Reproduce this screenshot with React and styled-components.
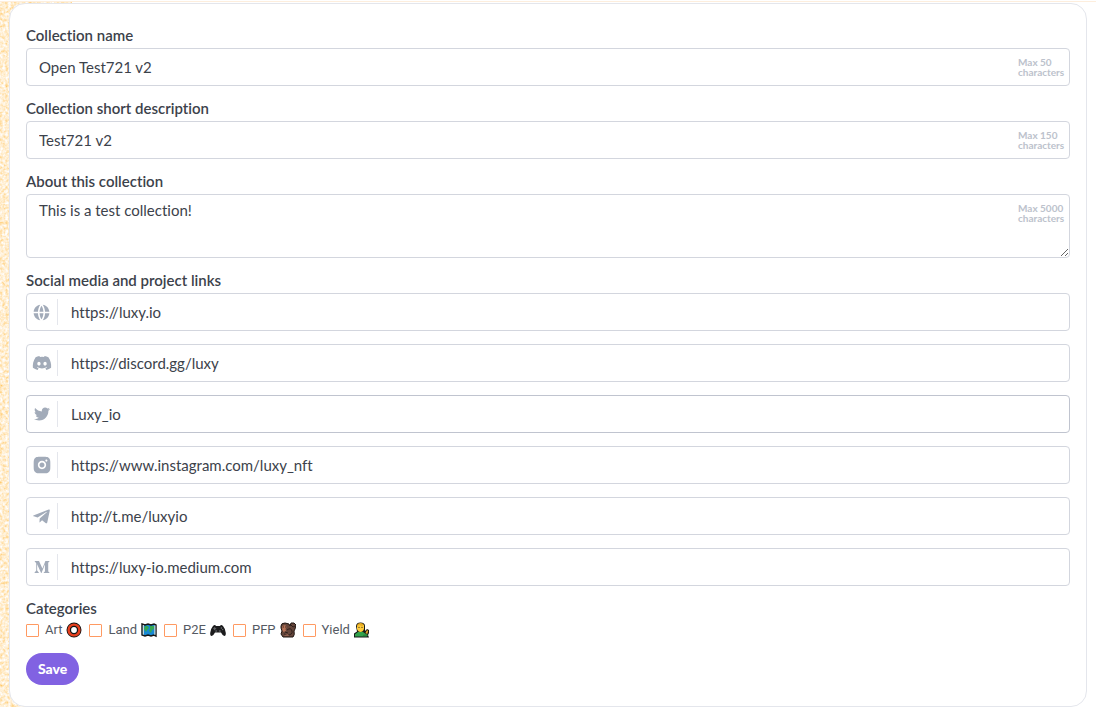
import React, { useState } from 'react';
import styled, { createGlobalStyle } from 'styled-components';
import { FaDiscord, FaTwitter, FaTelegramPlane, FaMediumM } from 'react-icons/fa';
import { RiGlobalFill, RiInstagramFill } from 'react-icons/ri';

const GlobalStyle = createGlobalStyle`
  * {
    box-sizing: border-box;
  }

  body {
    margin: 0;
    background: #fff;
    color: #3c424b;
    font-family: Lato, "Open Sans", sans-serif;
    font-size: 15px;
    font-variant-ligatures: none;
  }
`;

const Page = styled.main`
  position: relative;
  padding: 0 9px;
`;

const TopLine = styled.div`
  height: 2px;
  margin: 0 -9px 1px;
  border-bottom: 1px solid #fdeedd;
`;

const Texture = styled.svg`
  position: absolute;
  top: 2px;
  left: 0;
  z-index: -1;
  width: 72px;
  height: calc(100% - 2px);
`;

const Card = styled.form`
  display: flex;
  flex-direction: column;
  gap: 12px;
  padding: 21px 16px;
  background: #fff;
  border: 1px solid #e4e6ec;
  border-radius: 16px;
`;

const Field = styled.div`
  display: flex;
  flex-direction: column;
  gap: 3px;
`;

const labelText = `
  font-size: 15px;
  font-weight: 600;
  line-height: 20px;
`;

const Label = styled.label`
  ${labelText}
`;

const Group = styled.fieldset`
  min-width: 0;
  margin: 0;
  padding: 0;
  border: 0;
`;

const Legend = styled.legend`
  padding: 0;
  margin-bottom: 3px;
  ${labelText}
`;

const Control = styled.div`
  position: relative;
  display: flex;
`;

const Input = styled.input`
  flex: 1;
  min-width: 0;
  height: 38px;
  padding: 0 72px 0 12px;
  border: 1px solid #d3d6de;
  border-radius: 4px;
  background: #fff;
  color: inherit;
  font: inherit;
`;

const TextArea = styled.textarea`
  flex: 1;
  min-width: 0;
  height: 64px;
  padding: 5px 72px 5px 12px;
  border: 1px solid #d3d6de;
  border-radius: 4px;
  background: #fff;
  color: inherit;
  font: inherit;
  line-height: 20px;
  resize: vertical;
`;

const Hint = styled.span`
  position: absolute;
  top: 9px;
  right: 4px;
  width: 48px;
  color: #bcc2cc;
  font-size: 10px;
  font-weight: 700;
  line-height: 10px;
  pointer-events: none;
`;

const Links = styled.div`
  display: flex;
  flex-direction: column;
  gap: 13px;
`;

const LinkBox = styled.label`
  display: flex;
  align-items: center;
  height: 38px;
  border: 1px solid ${({ $strong }) => ($strong ? '#c0c4cf' : '#d3d6de')};
  border-radius: 4px;
`;

const IconCell = styled.span`
  display: flex;
  flex: none;
  align-items: center;
  justify-content: center;
  width: 31px;
  height: 26px;
  padding-right: 1px;
  border-right: 1px solid #e4e6ec;
  color: #a2abb9;
`;

const LinkInput = styled.input`
  flex: 1;
  min-width: 0;
  padding: 0 13px;
  border: 0;
  outline: 0;
  background: transparent;
  color: inherit;
  font: inherit;
`;

const Categories = styled.div`
  display: flex;
  flex-wrap: wrap;
  align-content: flex-start;
  gap: 7px;
  min-height: 20px;
`;

const Category = styled.label`
  display: flex;
  align-items: center;
  gap: 4px;
  color: #555a63;
  font-family: Roboto, sans-serif;
  font-size: 13px;
  line-height: 18px;

  svg {
    flex: none;
  }
`;

const Checkbox = styled.input`
  appearance: none;
  width: 13px;
  height: 13px;
  margin: 0 2px 0 0;
  border: 1px solid #ff9a62;
  border-radius: 1px;

  &:checked {
    background: #ff9a62;
  }
`;

const SaveButton = styled.button`
  align-self: flex-start;
  height: 32px;
  padding: 0 12px;
  border: 0;
  border-radius: 16px;
  background: #8162e2;
  color: #fff;
  font: inherit;
  font-size: 14px;
  font-weight: 900;
  line-height: 20px;
  cursor: pointer;
`;

const ArtIcon = () => (
  <svg width="16" height="16" viewBox="0 0 16 16" aria-hidden="true">
    <circle cx="8" cy="8" r="5.2" fill="none" stroke="#151515" strokeWidth="4.6" />
    <circle cx="8" cy="8" r="5.4" fill="none" stroke="#e8401f" strokeWidth="2.4" />
  </svg>
);

const LandIcon = () => (
  <svg width="16" height="16" viewBox="0 0 16 16" aria-hidden="true">
    <path d="M1 2l3 1 3-1 3 1 3-1 2 1v11l-2-1-3 1-3-1-3 1-3-1z" fill="#1689d4" stroke="#151515" strokeWidth="1.4" />
    <path d="M2.3 3v9.6M13.9 3.4v9.4" stroke="#f1e9d5" strokeWidth="1" />
    <path d="M4 4l3 0 1 2-2 2-1 2-2-3zM9 4l4 0v3l-2 1-1 3-2-2 1-2z" fill="#35a853" />
  </svg>
);

const GameIcon = () => (
  <svg width="16" height="16" viewBox="0 0 16 16" aria-hidden="true">
    <path d="M3 4q2-2 3 0h4q1-2 3 0 2 2 2.8 7 .2 3-1.5 3-1.5 0-3.3-3.5H5Q3.2 14 1.7 14 0 14 .2 11 1 6 3 4z" fill="#1c1c1d" />
    <path d="M3.2 6.7h3M4.7 5.2v3" stroke="#6b6d70" />
    <circle cx="11.4" cy="6" r=".8" fill="#77797c" />
    <circle cx="12.7" cy="7.6" r=".7" fill="#77797c" />
    <circle cx="6.2" cy="9" r="1" fill="#505257" />
    <circle cx="9.8" cy="9" r="1" fill="#505257" />
  </svg>
);

const ApeIcon = () => (
  <svg width="16" height="16" viewBox="0 0 16 16" aria-hidden="true">
    <path d="M1 4q0-3 4-3l4 1 1 2 1-3h3l2 2-1 4-1 2q1 4-1 6H3l-2-3 1-3-1-3z" fill="#64453a" stroke="#201612" strokeWidth="1" />
    <path d="M2.2 4l3-1 1.3 2-1 2 .5 2-2.4 1-1.4-2z" fill="#b67358" />
    <path d="M2.8 5h1M5.2 5H6" stroke="#241611" />
    <path d="M7 8q4-3 5 1t-5 4l-3-1M11 3l2 2 2-1M5 10l3 1" fill="none" stroke="#291b17" strokeWidth=".9" />
    <path d="M4 13l4-1 1 2H5z" fill="#906050" />
  </svg>
);

const YieldIcon = () => (
  <svg width="16" height="16" viewBox="0 0 16 16" aria-hidden="true">
    <path d="M0 15.5v-4l3-2-1-5Q2 .5 6.5.5T11 4v5l2-2 2 1v3l-1 2 1 2.5z" fill="#171a16" />
    <path d="M1 14.5v-2.3L4 10h5l3 2 1 2.5z" fill="#31a24c" />
    <path d="M3 3h7v4q-1 3-3.5 3T3 7z" fill="#ffcb3d" />
    <path d="M3 5V3q1-2 3.5-2T10 3L8 4 5 3z" fill="#e8ac21" />
    <path d="M4.5 5.4h1M7.5 5.4h1" stroke="#352b18" />
    <path d="M11.5 11l1.5-3 1.2 1-1 3z" fill="#e8a72a" />
    <path d="M9 13l4-1 1 2H9z" fill="#28863c" />
  </svg>
);

const links = [
  { name: 'Website', value: 'https://luxy.io', icon: <RiGlobalFill size={19} /> },
  { name: 'Discord', value: 'https://discord.gg/luxy', icon: <FaDiscord size={20} /> },
  { name: 'Twitter', value: 'Luxy_io', icon: <FaTwitter size={16} />, strong: true },
  { name: 'Instagram', value: 'https://www.instagram.com/luxy_nft', icon: <RiInstagramFill size={20} /> },
  { name: 'Telegram', value: 'http://t.me/luxyio', icon: <FaTelegramPlane size={19} /> },
  { name: 'Medium', value: 'https://luxy-io.medium.com', icon: <FaMediumM size={16} /> },
];

const categories = [
  { name: 'Art', icon: <ArtIcon /> },
  { name: 'Land', icon: <LandIcon /> },
  { name: 'P2E', icon: <GameIcon /> },
  { name: 'PFP', icon: <ApeIcon /> },
  { name: 'Yield', icon: <YieldIcon /> },
];

const App = () => {
  const [name, setName] = useState('Open Test721 v2');
  const [short, setShort] = useState('Test721 v2');
  const [about, setAbout] = useState('This is a test collection!');

  return (
    <>
      <GlobalStyle />
      <Page>
        <TopLine />
        <Texture aria-hidden="true">
          <filter id="grain" x="0" y="0" width="100%" height="100%">
            <feTurbulence type="fractalNoise" baseFrequency="0.35" numOctaves="2" seed="4" />
            <feColorMatrix values="0 0 0 0 1  0.4 0 0 0 0.64  1.1 0 0 0 0.01  0 0 0 0 1" colorInterpolationFilters="sRGB" />
          </filter>
          <rect width="100%" height="100%" filter="url(#grain)" />
        </Texture>
        <Card onSubmit={(e) => e.preventDefault()}>
          <Field>
            <Label htmlFor="name">Collection name</Label>
            <Control>
              <Input id="name" maxLength={50} value={name} onChange={(e) => setName(e.target.value)} />
              <Hint>Max 50 characters</Hint>
            </Control>
          </Field>
          <Field>
            <Label htmlFor="short">Collection short description</Label>
            <Control>
              <Input id="short" maxLength={150} value={short} onChange={(e) => setShort(e.target.value)} />
              <Hint>Max 150 characters</Hint>
            </Control>
          </Field>
          <Field>
            <Label htmlFor="about">About this collection</Label>
            <Control>
              <TextArea id="about" maxLength={5000} value={about} onChange={(e) => setAbout(e.target.value)} />
              <Hint>Max 5000 characters</Hint>
            </Control>
          </Field>
          <Group>
            <Legend>Social media and project links</Legend>
            <Links>
              {links.map((link) => (
                <LinkBox key={link.name} $strong={link.strong}>
                  <IconCell>{link.icon}</IconCell>
                  <LinkInput aria-label={link.name} defaultValue={link.value} />
                </LinkBox>
              ))}
            </Links>
          </Group>
          <Group>
            <Legend>Categories</Legend>
            <Categories>
              {categories.map((item) => (
                <Category key={item.name}>
                  <Checkbox type="checkbox" />
                  {item.name}
                  {item.icon}
                </Category>
              ))}
            </Categories>
          </Group>
          <SaveButton type="submit">Save</SaveButton>
        </Card>
      </Page>
    </>
  );
};

export default App;
